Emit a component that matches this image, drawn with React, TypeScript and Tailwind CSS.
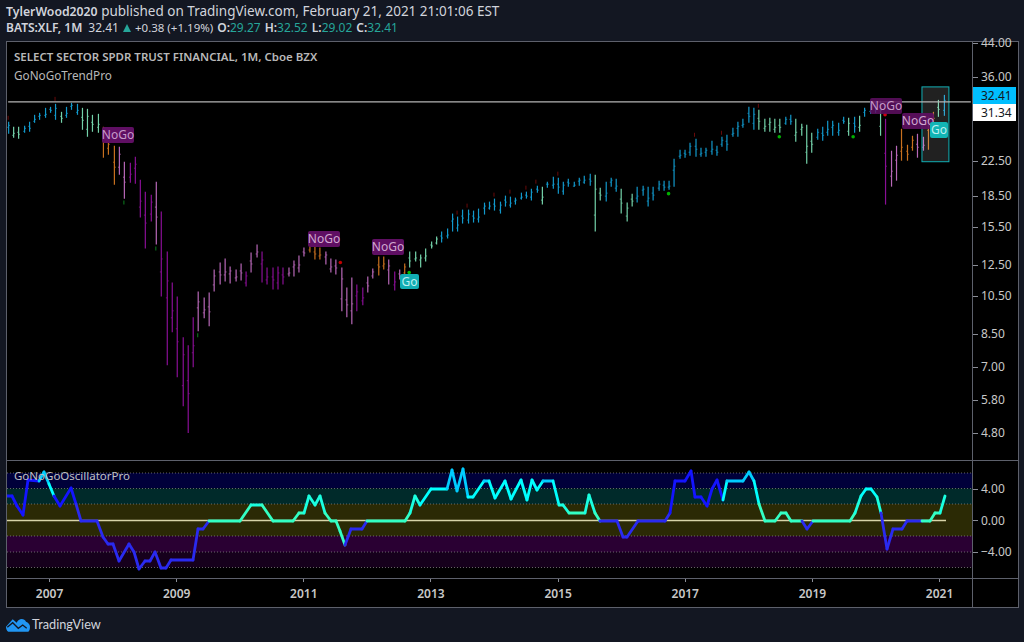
const FONT = "font-['Noto_Sans','Open_Sans',sans-serif]";

// [top, bottom, colour] one bar per month, x comes from the index
type Tone = "b" | "g" | "o" | "p" | "m";
const runs: [Tone, number[]][] = [
  ["b", [122, 134]],
  ["g", [127, 138, 127, 139]],
  ["b", [126, 133, 122, 132, 115, 123, 113, 120, 108, 118, 107, 113, 104, 120]],
  ["g", [112, 123]],
  ["b", [107, 118, 103, 110, 104, 115]],
  ["g", [108, 130, 109, 137, 115, 132, 114, 133]],
  ["o", [127, 158, 130, 155, 146, 185]],
  ["p", [147, 175, 162, 199]],
  ["m", [163, 183, 157, 184, 180, 218, 192, 249, 195, 222]],
  ["p", [182, 245]],
  ["m", [212, 297, 252, 366, 283, 333, 297, 378, 338, 407, 346, 434, 318, 368]],
  ["p", [292, 332, 298, 319, 293, 327, 270, 292, 263, 285, 259, 282, 267, 284, 270, 282, 264, 281]],
  ["m", [272, 287]],
  ["p", [253, 273, 245, 258]],
  ["m", [252, 283, 268, 285, 268, 290, 267, 290, 268, 285]],
  ["p", [268, 277, 261, 277, 256, 273, 248, 257]],
  ["o", [244, 253, 247, 260, 248, 260]],
  ["p", [252, 265, 259, 273, 260, 275, 268, 312, 288, 318, 278, 325]],
  ["m", [285, 312, 288, 306]],
  ["p", [277, 293, 269, 279]],
  ["o", [257, 276, 257, 270]],
  ["p", [260, 285]],
  ["m", [272, 291]],
  ["p", [270, 280]],
  ["o", [264, 277]],
  ["g", [252, 268, 252, 262, 255, 268, 249, 262, 242, 249, 237, 245]],
  ["b", [232, 243, 229, 239, 214, 232, 217, 232, 210, 224, 210, 224, 211, 223, 209, 223, 203, 215, 202, 210, 199, 211, 202, 214, 196, 207, 197, 208, 198, 205, 193, 200, 192, 199, 189, 201, 186, 193]],
  ["g", [187, 205]],
  ["b", [182, 188, 177, 189, 178, 194, 182, 195, 179, 187, 182, 187, 178, 186, 176, 184, 174, 186]],
  ["g", [175, 232, 188, 201]],
  ["b", [182, 202, 178, 187, 179, 192]],
  ["g", [189, 214, 203, 222, 194, 207]],
  ["b", [187, 203, 186, 196, 187, 207, 187, 201, 181, 191, 181, 191, 181, 190, 159, 187, 150, 159, 150, 158, 143, 156, 139, 157, 148, 157, 148, 157, 141, 155, 146, 156, 137, 147, 135, 151, 128, 137, 122, 137, 119, 128, 107, 123, 108, 130]],
  ["g", [110, 130, 119, 132, 118, 132, 119, 133, 119, 133]],
  ["b", [117, 125, 115, 125]],
  ["g", [119, 142, 124, 136, 125, 164, 133, 153]],
  ["b", [129, 140, 127, 141, 121, 136, 121, 136, 123, 136, 117, 124]],
  ["g", [118, 136]],
  ["b", [117, 133]],
  ["g", [116, 132]],
  ["b", [108, 117, 103, 114, 102, 113]],
  ["g", [101, 136]],
  ["m", [119, 205]],
  ["p", [151, 187, 146, 181]],
  ["o", [129, 161, 145, 161, 136, 151]],
  ["p", [134, 158, 137, 151]],
  ["o", [117, 150, 112, 122]],
  ["g", [100, 117]],
  ["b", [95, 116]],
];

const toneColor: Record<Tone, string> = {
  b: "#1299cc",
  g: "#74d2aa",
  o: "#c8701f",
  p: "#b868b8",
  m: "#8a0f96",
};

const bars = runs.flatMap(([tone, ys]) => {
  const out: { top: number; bottom: number; tone: Tone }[] = [];
  for (let i = 0; i < ys.length; i += 2) out.push({ top: ys[i], bottom: ys[i + 1], tone });
  return out;
});

const barX = (i: number) => Math.round(944.7 - (bars.length - 1 - i) * 5.3) + 0.5;

// dark marks and dots beside the bars
const redTicks = [[54, 99], [7, 118], [457, 213], [467, 206], [494, 195], [510, 192], [526, 188], [536, 182], [558, 174], [695, 135], [722, 133], [759, 106]];
const greenTicks = [[123, 203], [155, 249], [197, 336]];
const dots = [
  [780, 137, "#00b000"],
  [854, 137, "#00b000"],
  [669, 194, "#00b000"],
  [409, 273, "#00c000"],
  [340, 263, "#c00000"],
  [886, 115, "#d00010"],
] as const;

// oscillator line in page pixels; blue=true stretches use the weak-trend colour
const osc: { blue: boolean; pts: number[][] }[] = [
  { blue: true, pts: [[7, 497], [12, 497], [17, 507], [23, 516], [28, 481], [39, 482]] },
  { blue: false, pts: [[39, 482], [44, 473], [49, 485], [54, 497]] },
  { blue: true, pts: [[54, 497], [60, 507], [71, 489], [76, 505], [81, 522], [97, 522], [103, 538], [108, 545], [113, 545], [119, 562], [129, 545], [134, 553], [139, 570], [145, 562], [150, 562], [155, 553], [161, 569], [166, 569], [171, 561], [193, 561], [198, 530], [203, 530], [209, 522]] },
  { blue: false, pts: [[209, 522], [240, 522], [251, 506], [262, 506], [273, 522], [293, 522], [299, 514], [304, 514], [309, 497], [315, 506], [320, 497], [325, 514], [331, 522], [336, 522], [340, 532], [345, 546]] },
  { blue: true, pts: [[345, 546], [351, 530], [362, 530], [367, 522]] },
  { blue: false, pts: [[367, 522], [405, 522], [410, 514], [415, 497], [420, 506], [431, 490], [447, 490], [452, 471], [457, 492], [463, 470], [468, 498], [473, 498], [484, 482], [489, 482], [495, 499], [505, 482], [511, 500], [521, 481], [527, 501], [532, 481], [537, 491], [543, 482], [553, 482], [559, 506], [563, 506], [569, 514], [585, 514], [589, 496], [595, 514], [600, 522]] },
  { blue: true, pts: [[600, 522], [617, 522], [623, 538], [627, 538], [638, 522], [665, 522], [670, 514], [675, 482], [685, 482], [691, 472], [695, 498], [701, 498], [707, 507], [712, 490], [717, 481], [723, 501]] },
  { blue: false, pts: [[723, 501], [727, 482], [743, 482], [749, 473], [754, 482], [759, 505], [765, 522], [775, 522], [781, 514], [786, 514], [791, 522], [802, 522]] },
  { blue: true, pts: [[802, 522], [807, 530], [813, 522]] },
  { blue: false, pts: [[813, 522], [850, 522], [855, 514], [861, 497], [866, 490], [871, 490], [877, 498], [881, 514]] },
  { blue: true, pts: [[881, 514], [887, 550], [893, 530], [902, 530], [907, 522], [922, 522]] },
  { blue: false, pts: [[922, 522], [930, 522], [935, 514], [940, 514], [945, 497]] },
];

const oscColor = (y: number, blue: boolean) => {
  if (blue) return y > 512 ? "#2a2af0" : "#1414ff";
  if (y > 510) return "#33ffc4";
  if (y > 500) return "#1affe0";
  if (y > 484) return "#00ffff";
  return "#00ccff";
};

const priceTicks = [
  { label: "44.00", y: 43 },
  { label: "36.00", y: 77 },
  { label: "28.50", y: 117 },
  { label: "22.50", y: 161 },
  { label: "18.50", y: 196 },
  { label: "15.50", y: 227 },
  { label: "12.50", y: 265 },
  { label: "10.50", y: 296 },
  { label: "8.50", y: 334 },
  { label: "7.00", y: 367 },
  { label: "5.80", y: 400 },
  { label: "4.80", y: 433 },
];

const oscTicks = [
  { label: "4.00", y: 490 },
  { label: "0.00", y: 521.5 },
  { label: "\u22124.00", y: 553 },
];

const years = ["2007", "2009", "2011", "2013", "2015", "2017", "2019", "2021"];

const badges = [
  { text: "NoGo", left: 102, top: 127, w: 32, h: 16, cls: "bg-[#5f0f63] text-[#c79ac9]" },
  { text: "NoGo", left: 308, top: 231, w: 32, h: 16, cls: "bg-[#5f0f63] text-[#d0a8d0]" },
  { text: "NoGo", left: 372, top: 239, w: 32, h: 16, cls: "bg-[#5f0f63] text-[#d0a8d0]" },
  { text: "NoGo", left: 870, top: 98, w: 32, h: 16, cls: "bg-[#5f0f63]/85 text-[#c79ac9]" },
  { text: "NoGo", left: 902, top: 113, w: 32, h: 16, cls: "bg-[#5f0f63]/90 text-[#d0a8d0]" },
  { text: "Go", left: 400, top: 274, w: 19, h: 15, cls: "bg-[#12adb3] text-[#bdf0f0]" },
  { text: "Go", left: 930, top: 122, w: 18, h: 16, cls: "bg-[#12b5b5] text-[#bdf0f0]" },
];

function PriceAxis() {
  return (
    <div className="relative w-[46px] border-l border-[#5d606b] text-[12px] text-[#c8c8c8]">
      {priceTicks.map((t) => (
        <div key={t.label} className="absolute left-0 flex items-center gap-[3px] h-[16px]" style={{ top: t.y - 42 - 8 }}>
          <span className="w-[5px] h-px bg-[#8a8d96]" />
          <span>{t.label}</span>
        </div>
      ))}
      <div className="absolute left-0 right-[2px] top-[45px] h-[17px] pl-[8px] bg-[#00bfff] text-[#131722] leading-[17px]">32.41</div>
      <div className="absolute left-0 right-[2px] top-[62px] h-[17px] pl-[8px] bg-white text-[#131722] leading-[17px]">31.34</div>
    </div>
  );
}

function OscAxis() {
  return (
    <div className="relative w-[46px] border-l border-[#5d606b] text-[12px] text-[#c8c8c8]">
      {oscTicks.map((t) => (
        <div key={t.label} className="absolute left-0 flex items-center gap-[3px] h-[16px]" style={{ top: t.y - 462 - 8 }}>
          <span className="w-[5px] h-px bg-[#8a8d96]" />
          <span>{t.label}</span>
        </div>
      ))}
    </div>
  );
}

function MainPane() {
  return (
    <div className="relative w-[965px] overflow-hidden">
      <svg className="block w-full h-full" viewBox="7 42 965 419">
        {bars.map((b, i) => {
          const x = barX(i);
          const color = toneColor[b.tone];
          const span = b.bottom - b.top;
          const open = Math.round(b.top + span * (i % 2 ? 0.7 : 0.4)) + 0.5;
          const close = Math.round(b.top + span * (i % 3 === 0 ? 0.25 : 0.55)) + 0.5;
          return (
            <g key={i} stroke={color} strokeWidth="1.2">
              <line x1={x} x2={x} y1={b.top} y2={b.bottom} />
              <line x1={x - 1.4} x2={x} y1={open} y2={open} strokeWidth="0.8" />
              <line x1={x} x2={x + 1.4} y1={close} y2={close} strokeWidth="0.8" />
            </g>
          );
        })}
        {redTicks.map(([x, y]) => (
          <line key={`${x}-${y}`} x1={x} x2={x} y1={y - 2} y2={y + 2} stroke="#6a0a0a" strokeWidth="1" />
        ))}
        {greenTicks.map(([x, y]) => (
          <line key={`${x}-${y}`} x1={x} x2={x} y1={y - 2} y2={y + 2} stroke="#0a6a1a" strokeWidth="1.2" />
        ))}
        {dots.map(([x, y, c]) => (
          <circle key={`${x}-${y}`} cx={x} cy={y} r="1.8" fill={c} />
        ))}
        <rect x="923" y="87" width="27" height="75" fill="#ffffff" fillOpacity="0.13" stroke="#12b0b5" strokeWidth="1" />
        <line x1="7" x2="972" y1="102" y2="102" stroke="#b4b4b4" strokeWidth="1.4" />
      </svg>
      <div className="absolute left-[7px] top-[7px] flex flex-col gap-[2px] text-[#b8b8b8]">
        <span className="font-semibold text-[11.5px] leading-[16px]">SELECT SECTOR SPDR TRUST FINANCIAL, 1M, Cboe BZX</span>
        <span className="text-[11.75px] leading-[16px]">GoNoGoTrendPro</span>
      </div>
      {badges.map((b) => (
        <div
          key={`${b.text}-${b.left}`}
          className={`absolute flex items-center justify-center rounded-[2px] text-[12px] ${b.cls}`}
          style={{ left: b.left - 7, top: b.top - 42, width: b.w, height: b.h }}
        >
          {b.text}
        </div>
      ))}
    </div>
  );
}

function OscPane() {
  const levels = [474, 489.5, 505, 537, 553, 568.5];
  return (
    <div className="relative w-[965px]">
      <svg className="block w-full h-full" viewBox="7 462 965 117">
        <rect x="7" y="474" width="965" height="15.5" fill="#00003a" />
        <rect x="7" y="489.5" width="965" height="15.5" fill="#002a2a" />
        <rect x="7" y="505" width="965" height="32" fill="#2b2a05" />
        <rect x="7" y="537" width="965" height="16" fill="#2a0033" />
        <rect x="7" y="553" width="965" height="15.5" fill="#16001c" />
        {levels.map((y) => (
          <line key={y} x1="7" x2="972" y1={y} y2={y} stroke="#7d7d7d" strokeWidth="0.8" strokeDasharray="1 2" />
        ))}
        <line x1="7" x2="946" y1="521.5" y2="521.5" stroke="#d8d4a8" strokeWidth="1.6" />
        {osc.flatMap((run, r) =>
          run.pts.slice(1).map((p, i) => {
            const prev = run.pts[i];
            return (
              <line
                key={`${r}-${i}`}
                x1={prev[0]}
                y1={prev[1]}
                x2={p[0]}
                y2={p[1]}
                stroke={oscColor((p[1] + prev[1]) / 2, run.blue)}
                strokeWidth="2.8"
                strokeLinecap="round"
              />
            );
          })
        )}
      </svg>
      <span className="absolute left-[7px] top-[7px] text-[11.5px] leading-[16px] text-[#c0c0c0]">GoNoGoOscillatorPro</span>
    </div>
  );
}

function TimeAxis() {
  return (
    <div className="flex w-[965px] ml-[-21px] text-[12px] font-semibold text-[#c8c8c8]">
      {years.map((y) => (
        <div key={y} className="flex flex-col items-center w-[127.15px] shrink-0">
          <span className="w-px h-[3px] bg-[#8a8d96]" />
          <span className="mt-[4px] leading-[16px]">{y}</span>
        </div>
      ))}
    </div>
  );
}

function Logo() {
  return (
    <svg width="24" height="14" viewBox="0 0 24 14" className="shrink-0">
      <path d="M0 8.7 L6.7 1.3 L10.7 4.7 C11.8 2.2 13.6 1 15.7 1 C17.6 1 19.2 2 20 3.7 C22.2 4.6 24 6.4 24 8.7 C24 11.5 23.4 13 22.3 13.7 L2.3 13.7 C0.8 12.8 0 10.8 0 8.7 Z" fill="#2196f3" />
      <path d="M1.3 9.3 L6.7 4.7 L12.3 10.3 L16.7 7 L20.7 10.3" fill="none" stroke="#131722" strokeWidth="1.3" />
    </svg>
  );
}

export default function App() {
  return (
    <div className={`w-[1024px] h-[642px] overflow-hidden bg-[#131722] ${FONT}`}>
      <header className="h-[41px] pl-[6px] pt-[3px] text-[#d1d4dc]">
        <div className="h-[17px] leading-[17px] text-[13.5px] whitespace-nowrap">
          <span className="font-semibold text-[12.25px]">TylerWood2020</span> published on TradingView.com, February 21, 2021 21:01:06 EST
        </div>
        <div className="flex items-center h-[16px] text-[12px] whitespace-nowrap">
          <span className="font-semibold">BATS:XLF, 1M</span>
          <span className="ml-[6px]">32.41</span>
          <span className="mx-[4px] w-0 h-0 shrink-0 border-x-[4.5px] border-x-transparent border-b-[8px] border-b-[#26a69a]" />
          <span className="text-[11.5px]">+0.38 (+1.19%)</span>
          <span className="ml-[4px] font-semibold">O:</span>
          <span className="text-[#26a69a]">29.27</span>
          <span className="ml-[4px] font-semibold">H:</span>
          <span className="text-[#26a69a]">32.52</span>
          <span className="ml-[4px] font-semibold">L:</span>
          <span className="text-[#26a69a]">29.02</span>
          <span className="ml-[4px] font-semibold">C:</span>
          <span className="text-[#26a69a]">32.41</span>
        </div>
      </header>

      <main className="ml-[6px] w-[1013px] h-[567px] border border-[#5d606b] bg-black flex flex-col">
        <div className="flex h-[419px] border-b border-[#5d606b]">
          <MainPane />
          <PriceAxis />
        </div>
        <div className="flex h-[118px] border-b border-[#5d606b]">
          <OscPane />
          <OscAxis />
        </div>
        <div className="flex flex-1">
          <div className="w-[965px] overflow-hidden">
            <TimeAxis />
          </div>
          <div className="w-[46px] border-l border-[#5d606b]" />
        </div>
      </main>

      <footer className="flex items-center gap-[2px] h-[34px] pl-[6px]">
        <Logo />
        <span className="font-['Lato',sans-serif] text-[12.75px] text-[#d1d4dc]">TradingView</span>
      </footer>
    </div>
  );
}
